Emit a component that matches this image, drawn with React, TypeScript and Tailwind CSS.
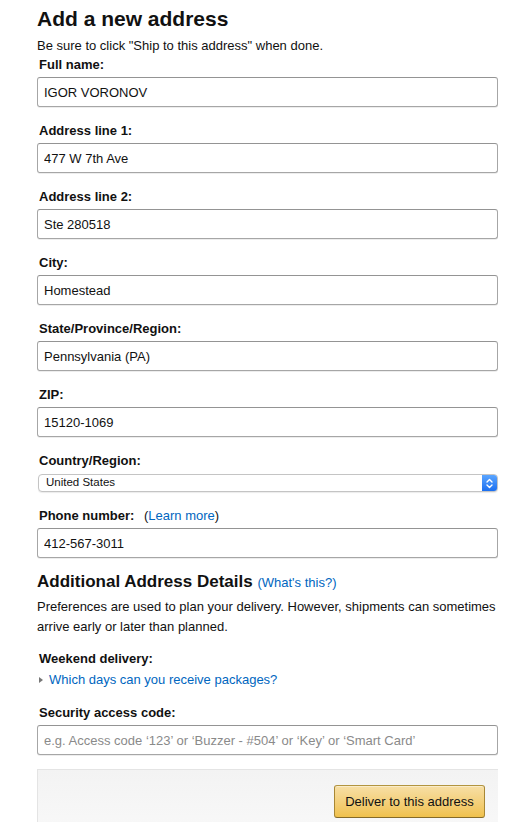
const font = "font-['Liberation_Sans',Arial,sans-serif]"

function Field({ label, value, placeholder, extra }: { label: string; value?: string; placeholder?: string; extra?: React.ReactNode }) {
  return (
    <div className="mb-[14px]">
      <div className="mb-[3px] pl-[2px] text-[13px] leading-[19px] font-bold text-[#111]">
        {label}
        {extra}
      </div>
      <input
        readOnly
        defaultValue={value}
        placeholder={placeholder}
        className="block h-[30px] w-full rounded-[3px] border border-[#a6a6a6] border-t-[#949494] bg-white px-[6px] text-[13px] text-[#111] shadow-[inset_0_1px_0_rgba(255,255,255,0.5),0_1px_0_rgba(0,0,0,0.07)] outline-none placeholder:text-[#8a8a8a]"
      />
    </div>
  )
}

function App() {
  const fields = [
    { label: 'Full name:', value: 'IGOR VORONOV' },
    { label: 'Address line 1:', value: '477 W 7th Ave' },
    { label: 'Address line 2:', value: 'Ste 280518' },
    { label: 'City:', value: 'Homestead' },
    { label: 'State/Province/Region:', value: 'Pennsylvania (PA)' },
    { label: 'ZIP:', value: '15120-1069' },
  ]

  return (
    <div className={`min-h-screen bg-white ${font} text-[#111]`}>
      <div className="ml-[37px] w-[461px] pt-[7px]">
        <h1 className="text-[21px] leading-[24px] font-bold">Add a new address</h1>
        <p className="mt-[5px] text-[13px] leading-[19px]">Be sure to click "Ship to this address" when done.</p>

        {fields.map((f) => (
          <Field key={f.label} label={f.label} value={f.value} />
        ))}

        <div className="mb-[14px]">
          <div className="mb-[4px] pl-[2px] text-[13px] leading-[19px] font-bold">Country/Region:</div>
          <div className="ml-[1px] flex h-[18px] items-stretch overflow-hidden rounded-[4px] border border-[#c4c4c4] bg-white shadow-[0_1px_1px_rgba(0,0,0,0.08)]">
            <div className="flex flex-1 items-center pl-[7px] text-[11.5px] text-[#111]">United States</div>
            <div className="flex w-[15px] items-center justify-center bg-gradient-to-b from-[#5aa5ff] to-[#1a6ff0]">
              <svg width="7" height="11" viewBox="0 0 7 11" fill="none" stroke="white" strokeWidth="1.4" strokeLinecap="round" strokeLinejoin="round">
                <path d="M1 4 L3.5 1.5 L6 4" />
                <path d="M1 7 L3.5 9.5 L6 7" />
              </svg>
            </div>
          </div>
        </div>

        <Field
          label="Phone number:"
          value="412-567-3011"
          extra={
            <span className="font-normal">
              {'  '}
              <span className="ml-[6px]">(</span>
              <span className="text-[#0066c0]">Learn more</span>)
            </span>
          }
        />

        <h2 className="mt-[-1px] text-[17px] leading-[21px] font-bold">
          Additional Address Details{' '}
          <span className="text-[13px] font-normal text-[#0066c0]">(What's this?)</span>
        </h2>
        <p className="mt-[4px] text-[13px] leading-[20px]">
          Preferences are used to plan your delivery. However, shipments can sometimes arrive early or later than planned.
        </p>

        <div className="mt-[12px] pl-[2px] text-[13px] leading-[19px] font-bold">Weekend delivery:</div>
        <div className="mt-[2px] flex items-center text-[13px] leading-[19px]">
          <svg width="4" height="6" viewBox="0 0 4 6" className="ml-[2px] mr-[6px]">
            <path d="M0 0 L4 3 L0 6 Z" fill="#777" />
          </svg>
          <span className="text-[#0066c0]">Which days can you receive packages?</span>
        </div>

        <div className="mt-[14px]">
          <Field label="Security access code:" placeholder="e.g. Access code ‘123’ or ‘Buzzer - #504’ or ‘Key’ or ‘Smart Card’" />
        </div>

        <div className="flex h-[60px] justify-end border-t border-l border-[#e4e4e4] bg-gradient-to-b from-[#f3f3f3] to-[#f8f8f8] pt-[15px] pr-[13px]">
          <button className="h-[33px] w-[151px] rounded-[3px] border border-[#a88734] border-t-[#b29540] border-b-[#846a29] bg-gradient-to-b from-[#f7dfa5] to-[#f0c14b] text-[13px] text-[#111] shadow-[inset_0_1px_0_rgba(255,255,255,0.4)]">
            Deliver to this address
          </button>
        </div>
      </div>
    </div>
  )
}

export default App
